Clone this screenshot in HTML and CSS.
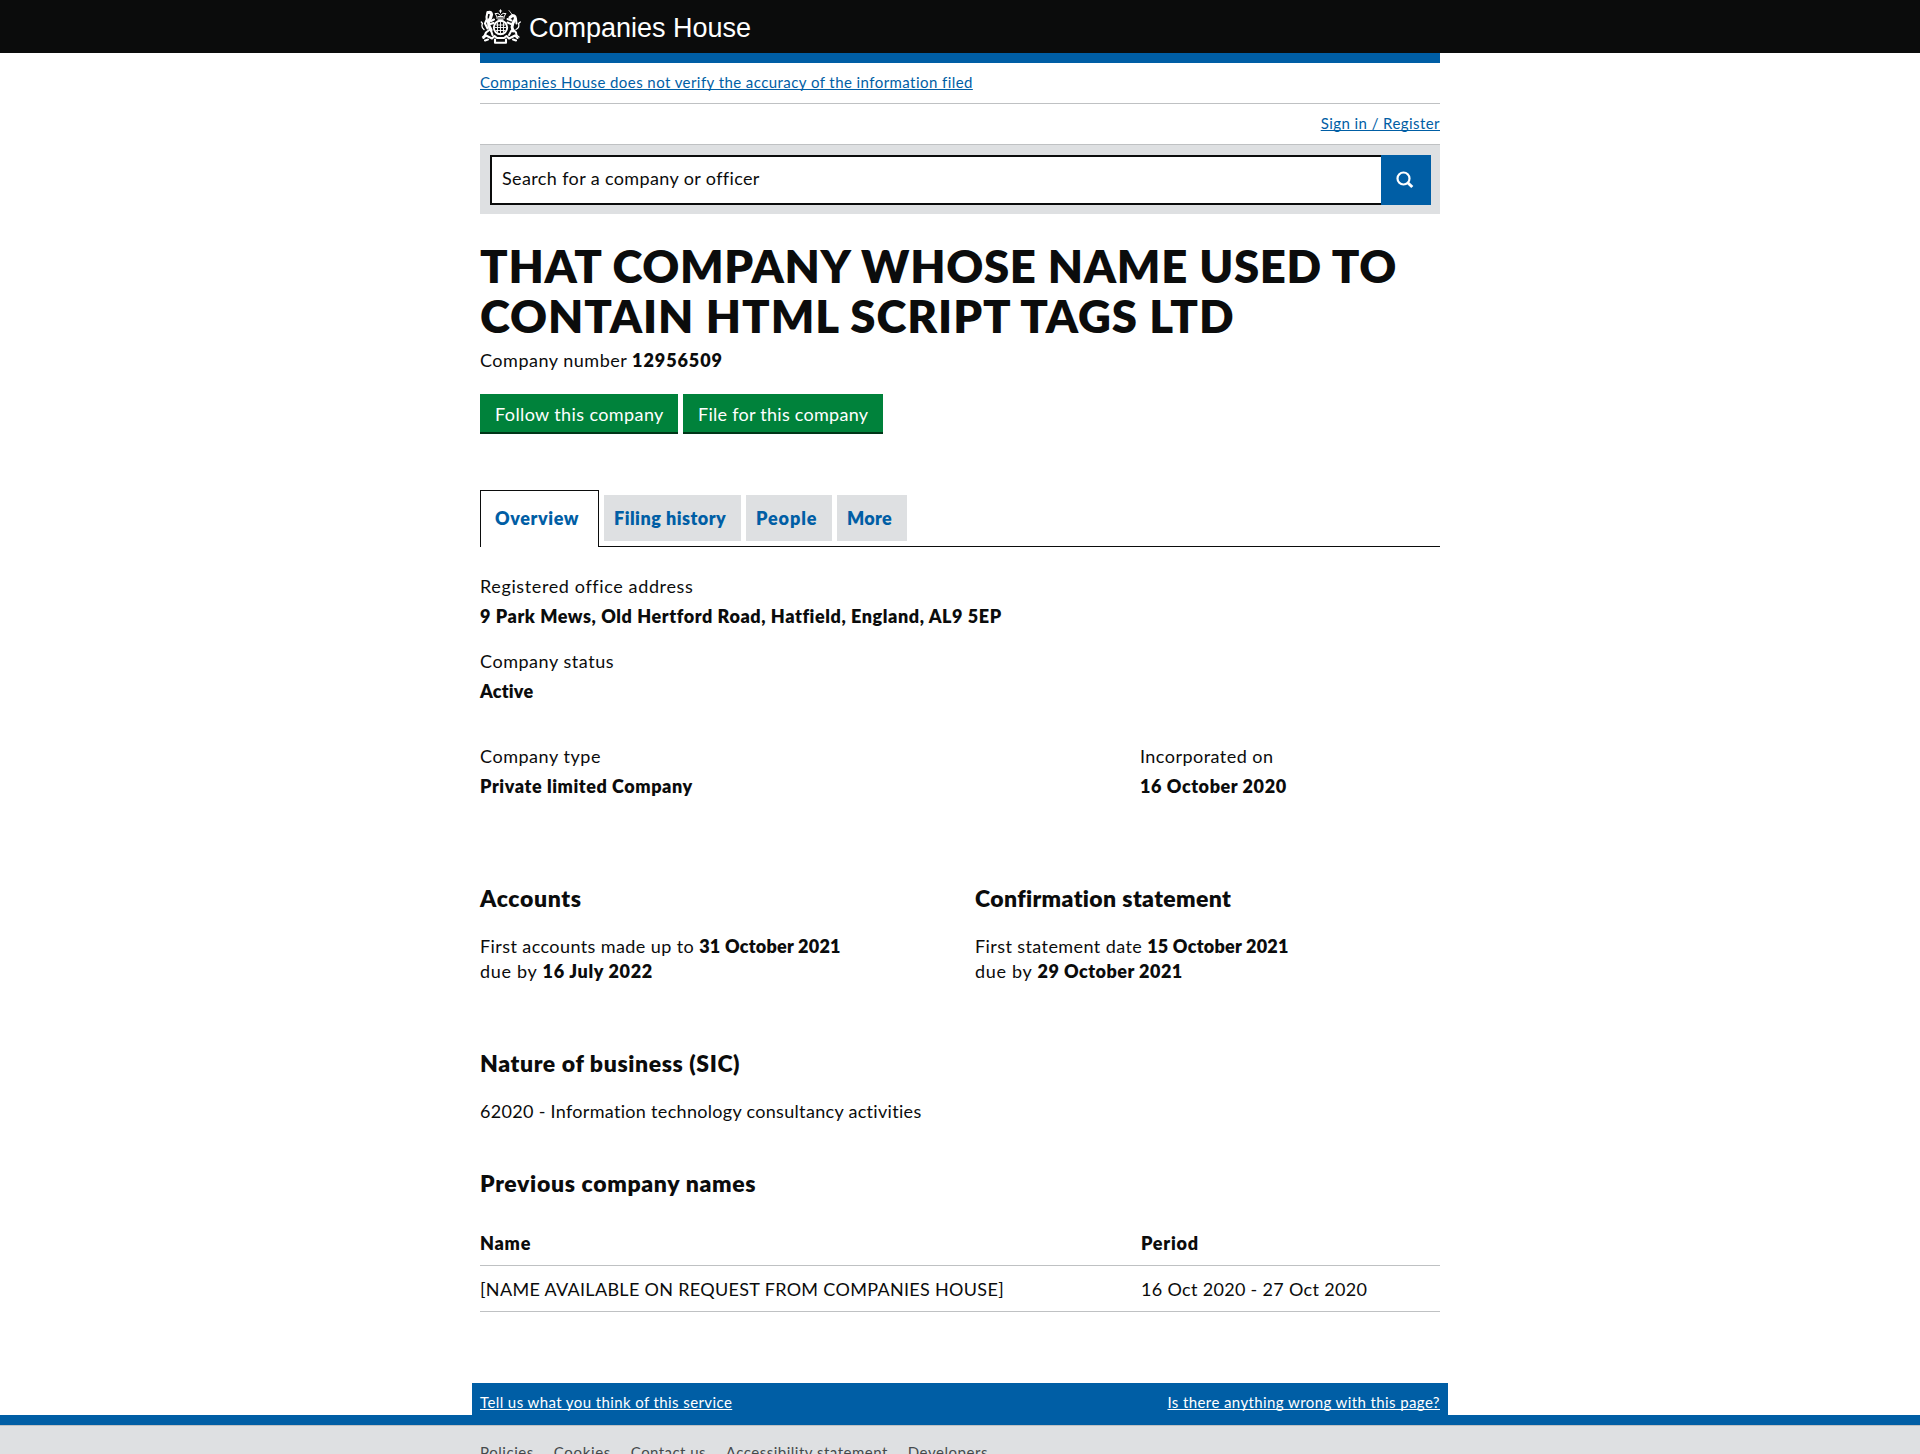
FILE: index.html
```html
<!DOCTYPE html>
<html lang="en">
<head>
<meta charset="utf-8">
<title>THAT COMPANY WHOSE NAME USED TO CONTAIN HTML SCRIPT TAGS LTD - Companies House</title>
<link rel="stylesheet" href="styles.css">
</head>
<body>
<header class="site-header">
  <div class="container brand">
    <svg class="crest" viewBox="0 0 42 36" fill="none" stroke="#fff" stroke-linecap="round" stroke-linejoin="round">
      <path stroke-width="1" d="M20.500.8v3M19.300 2h2.400M16.500 9h8M17 8l-1.800-3.600M24 8l1.800-3.600M15.500 4.500Q18 3 20.500 6.500 23 3 25.500 4.500M18 7.500h5"/>
      <circle cx="20.500" cy="18.500" r="6.700" stroke-width="1.900"/>
      <path stroke-width=".9" d="M20.500 12.500v12M14.800 18.500h11.400M17.500 14v9M23.500 14v9M16 16h9M16 21.500h9M18 10.700h5"/>
      <path stroke-width="3.200" d="M8.500 3.500Q11 3 11.500 5.500L10.500 9 8.500 12.500 9 17 11 21"/>
      <path stroke-width="2.100" d="M7.500 3 6.500 8 7 12M11 12l3-1.500M10.500 15l3-1M10 20.500 6 23.500 4.500 27M11 21.500l1.500 4.500M6.500 11 5 14.500l2.500 5"/>
      <path stroke-width="1.300" d="M4 20.500Q.8 18 2.500 14.500L1.300 13M4.500 26.500 2.500 28"/>
      <path stroke-width=".8" d="m29 1.500 3.500 4.500"/>
      <path stroke-width="2.900" d="M30 8.500 32.500 6.500Q36 6.500 35 10.500L33 14l-1 4 1 4"/>
      <path stroke-width="2" d="M31.500 11.500 27.500 10M31 15l-3.500-1.500M33 20.500l3 3 .5 3M31.500 21.500 29 26M36 9.500l.5 5"/>
      <path stroke-width="1.300" d="M36 20.500q4-2 2.500-6l1.800-1.500M37 26.500l2 1.500"/>
      <path stroke-width="2.100" d="M3.500 29 6 26.500l6 3 2.500-2.500 2.500 2h7l2.500-2 2.500 2.500 6-3 2.500 2.500M5 31.500l3-1M36 31.500l-3-1M15 30.500v3.200h11v-3.200"/>
    </svg>
    <span class="brand-name">Companies House</span>
  </div>
</header>
<div class="container page">
  <div class="notice"><a href="#">Companies House does not verify the accuracy of the information filed</a></div>
  <nav class="account"><a href="#">Sign in / Register</a></nav>
  <form class="search">
    <div class="search-field">Search for a company or officer</div>
    <button class="search-button" type="button" aria-label="Search">
      <svg width="18" height="18" viewBox="0 0 18 18" fill="none" stroke="#fff"><circle cx="7.500" cy="7.500" r="6" stroke-width="2.200"/><path stroke-width="3" d="m11.500 11.500 4.800 4.500"/></svg>
    </button>
  </form>
  <main>
    <h1 class="title">THAT COMPANY WHOSE NAME USED TO<br><span class="title-second">CONTAIN HTML SCRIPT TAGS LTD</span></h1>
    <p class="number">Company number <strong class="number-value">12956509</strong></p>
    <div class="actions"><a class="action" href="#">Follow this company</a><a class="action action-file" href="#">File for this company</a></div>
    <nav class="tabs">
      <a class="tab tab-active" href="#">Overview</a>
      <a class="tab tab-filing" href="#">Filing history</a>
      <a class="tab tab-people" href="#">People</a>
      <a class="tab tab-more" href="#">More</a>
    </nav>
    <dl class="facts">
      <dt class="address-label">Registered office address</dt><dd>9 Park Mews, Old Hertford Road, Hatfield, England, AL9 5EP</dd>
      <dt>Company status</dt><dd class="status">Active</dd>
    </dl>
    <div class="type-row">
      <dl class="facts"><dt>Company type</dt><dd>Private limited Company</dd></dl>
      <dl class="facts incorporated"><dt>Incorporated on</dt><dd>16 October 2020</dd></dl>
    </div>
    <div class="filings">
      <section><h2>Accounts</h2><p>First accounts made up to <strong>31 October 2021</strong><br><span class="due">due by</span> <strong class="due-date">16 July 2022</strong></p></section>
      <section><h2 class="confirmation">Confirmation statement</h2><p>First statement date <strong>15 October 2021</strong><br><span class="due">due by</span> <strong class="due-confirmation">29 October 2021</strong></p></section>
    </div>
    <section class="sic"><h2>Nature of business (SIC)</h2><p>62020 - Information technology consultancy activities</p></section>
    <section class="names">
      <h2>Previous company names</h2>
      <div class="names-row names-head"><span>Name</span><span>Period</span></div>
      <div class="names-row"><span>[NAME AVAILABLE ON REQUEST FROM COMPANIES HOUSE]</span><span>16 Oct 2020 - 27 Oct 2020</span></div>
    </section>
  </main>
</div>
<div class="feedback"><a href="#">Tell us what you think of this service</a><a href="#">Is there anything wrong with this page?</a></div>
<footer class="footer"><div class="footer-body"><nav class="container footer-links"><a href="#">Policies</a><a class="link-cookies" href="#">Cookies</a><a class="link-contact" href="#">Contact us</a><a class="link-accessibility" href="#">Accessibility statement</a><a href="#">Developers</a></nav></div></footer>
</body>
</html>
```
FILE: styles.css
```css
* { box-sizing: border-box; }
body { margin: 0; background: #fff; color: #0b0c0c; font: 18px/25px Lato, "Open Sans", sans-serif; }
h1, h2, p, dl, dd { margin: 0; }
a { color: #005ea5; }
strong { font-weight: 800; letter-spacing: 0.23px; }
.container { width: 960px; margin: 0 auto; }

/* Header */
.site-header { height: 53px; background: #0b0c0c; }
.brand { display: flex; padding-top: 9px; }
.crest { width: 42px; height: 36px; }
.brand-name { margin-left: 7px; color: #fff; font: 27px/38px "Liberation Sans", Arial, sans-serif; }
.page { border-top: 10px solid #005ea5; }
.notice, .account { height: 41px; padding-top: 9px; border-bottom: 1px solid #bfc1c3; font-size: 15px; line-height: 20px; letter-spacing: 0.43px; }
.notice a, .account a, .feedback a { text-decoration-thickness: 1px; text-underline-offset: 1px; text-decoration-skip-ink: none; }
.account { text-align: right; }

/* Search */
.search { display: flex; height: 69px; padding: 10px 9px 9px 10px; background: #dee0e2; }
.search-field { flex: 1; padding: 9px 10px; border: 2px solid #0b0c0c; border-right: 0; background: #fff; letter-spacing: 0.37px; }
.search-button { display: flex; justify-content: center; align-items: center; width: 50px; padding: 0 3px 0 0; border: 0; background: #005ea5; }

/* Company heading */
.title { padding-top: 27px; font-size: 45.5px; line-height: 50px; font-weight: 800; letter-spacing: 0.68px; white-space: nowrap; }
.title-second { letter-spacing: 0.938px; }
.number { margin-top: 7px; letter-spacing: 0.513px; }
.number-value { letter-spacing: 0.9px; }
.actions { display: flex; gap: 5px; margin-top: 21px; }
.action { width: 198px; height: 40px; padding: 8px 0 0 15px; border-bottom: 2px solid #003618; background: #00823b; color: #fff; text-decoration: none; letter-spacing: 0.39px; white-space: nowrap; }
.action-file { width: 200px; letter-spacing: 0.27px; }

/* Tabs */
.tabs { display: flex; gap: 5px; height: 57px; margin-top: 56px; border-bottom: 1px solid #0b0c0c; }
.tab { height: 46px; margin-top: 5px; padding: 11px 0 0 10px; background: #dee0e2; font-weight: 800; text-decoration: none; white-space: nowrap; }
.tab-active { width: 119px; height: 57px; margin-top: 0; padding: 15px 0 0 14px; border: 1px solid #0b0c0c; border-bottom: 0; background: #fff; letter-spacing: 0.6px; }
.tab-filing { width: 137px; letter-spacing: 0.48px; }
.tab-people { width: 86px; letter-spacing: 0.9px; }
.tab-more { width: 70px; letter-spacing: 0.3px; }

/* Overview */
.facts { margin-top: 27px; letter-spacing: 0.54px; }
.address-label { letter-spacing: 0.62px; }
.facts dd { margin: 5px 0 20px; font-weight: 800; letter-spacing: 0.57px; }
.facts .status { letter-spacing: 0.2px; }
.type-row { display: grid; grid-template-columns: 660px 1fr; margin-top: 40px; }
.type-row .facts, .type-row dd { margin-bottom: 0; }
.type-row .facts { margin-top: 0; }
.incorporated { letter-spacing: 0.46px; }
h2 { margin-bottom: 21px; font-size: 23px; line-height: 30px; font-weight: 800; letter-spacing: 0.65px; }
.confirmation { letter-spacing: 0.37px; }
.filings { display: grid; grid-template-columns: 495px 1fr; margin-top: 84px; letter-spacing: 0.41px; }
.due { letter-spacing: 0.7px; }
.due-date { letter-spacing: 0.68px; }
.due-confirmation { letter-spacing: 0.47px; }
.sic { margin-top: 64px; }
.sic h2 { letter-spacing: 0.6px; }
.sic p { letter-spacing: 0.308px; }
.names { margin-top: 44px; }
.names h2 { margin-bottom: 22px; }
.names-row { display: grid; grid-template-columns: 661px 1fr; height: 46px; padding-top: 11px; border-bottom: 1px solid #bfc1c3; letter-spacing: 0.315px; }
.names-head { font-weight: 800; letter-spacing: 0.75px; }

/* Footer */
.feedback { display: flex; justify-content: space-between; width: 976px; height: 32px; margin: 71px auto 0; padding: 9px 8px 0; background: #005ea5; font-size: 15px; line-height: 20px; letter-spacing: 0.4px; }
.feedback a { color: #fff; }
.footer { height: 39px; overflow: hidden; border-top: 10px solid #005ea5; background: #dee0e2; }
.footer-body { border-top: 1px solid #bfc1c3; }
.footer-links { display: flex; gap: 20px; padding-top: 16px; font-size: 15px; line-height: 20px; letter-spacing: 0.55px; }
.footer-links a { color: #454a4c; text-decoration: none; }
.link-cookies { letter-spacing: 0.64px; }
.link-contact { letter-spacing: 0.43px; }
.link-accessibility { letter-spacing: 0.49px; }
```
